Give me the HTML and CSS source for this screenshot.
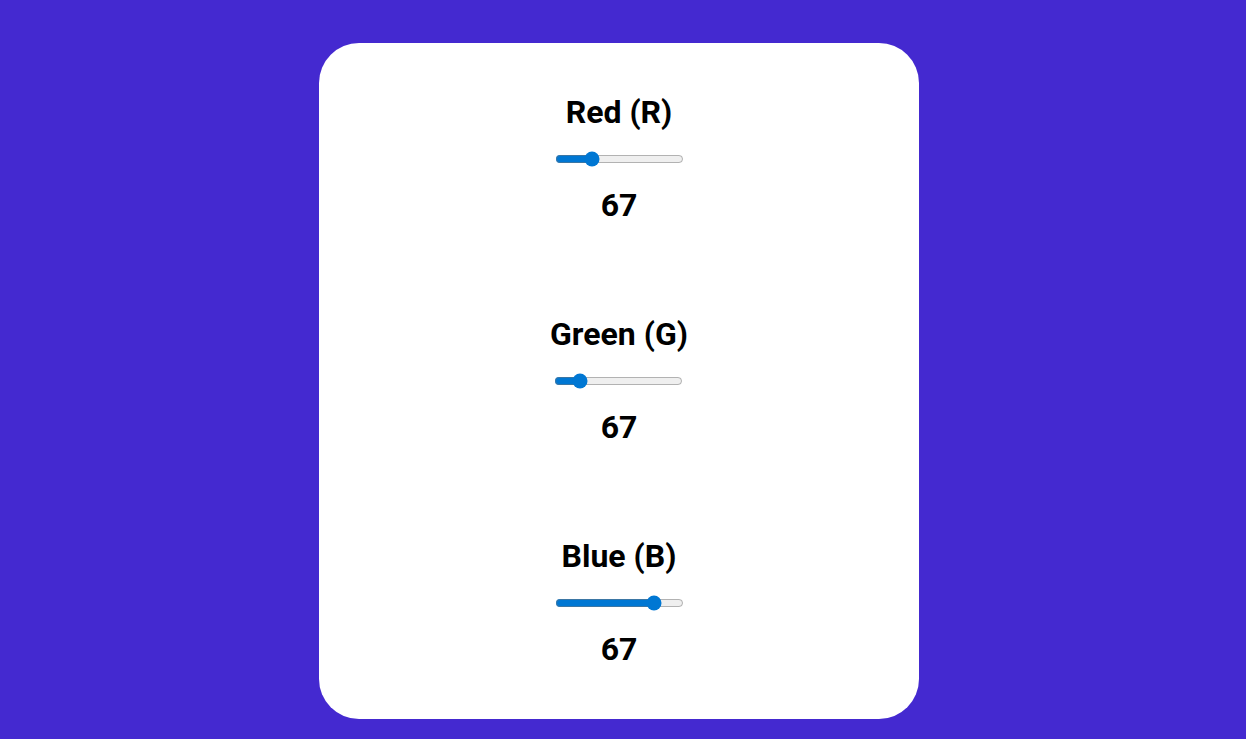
FILE: index.html
```html
<!DOCTYPE html>
<html>
<head>
<meta charset="utf-8">
<link rel="stylesheet" href="styles.css">
</head>
<body>
<main class="card">
  <section class="group">
    <h2 class="label">Red (R)</h2>
    <input class="slider" type="range" min="0" max="255" value="67">
    <div class="value">67</div>
  </section>
  <section class="group">
    <h2 class="label">Green (G)</h2>
    <input class="slider" type="range" min="0" max="255" value="40">
    <div class="value">67</div>
  </section>
  <section class="group">
    <h2 class="label">Blue (B)</h2>
    <input class="slider" type="range" min="0" max="255" value="207">
    <div class="value">67</div>
  </section>
</main>
</body>
</html>
```
FILE: styles.css
```css
html, body {
  margin: 0;
  padding: 0;
}
body {
  background: #4429d0;
  font-family: Roboto, "Liberation Sans", sans-serif;
  color: #000;
  min-height: 739px;
  box-sizing: border-box;
  padding-right: 8px;
  display: flex;
  justify-content: center;
  align-items: flex-start;
}
.card {
  margin-top: 43px;
  width: 600px;
  height: 676px;
  box-sizing: border-box;
  background: #fff;
  border-radius: 40px;
  padding: 51px 0 0;
  display: flex;
  flex-direction: column;
  align-items: center;
  gap: 93px;
}
.group {
  display: flex;
  flex-direction: column;
  align-items: center;
  gap: 20px;
}
.label {
  margin: 0;
  font-size: 32px;
  line-height: 36px;
  font-weight: 700;
}
.slider {
  margin: 1px 0 0;
  width: 129px;
  height: 16px;
  accent-color: #0077d3;
}
.value {
  margin: 0;
  font-size: 32px;
  line-height: 36px;
  font-weight: 700;
}
```
